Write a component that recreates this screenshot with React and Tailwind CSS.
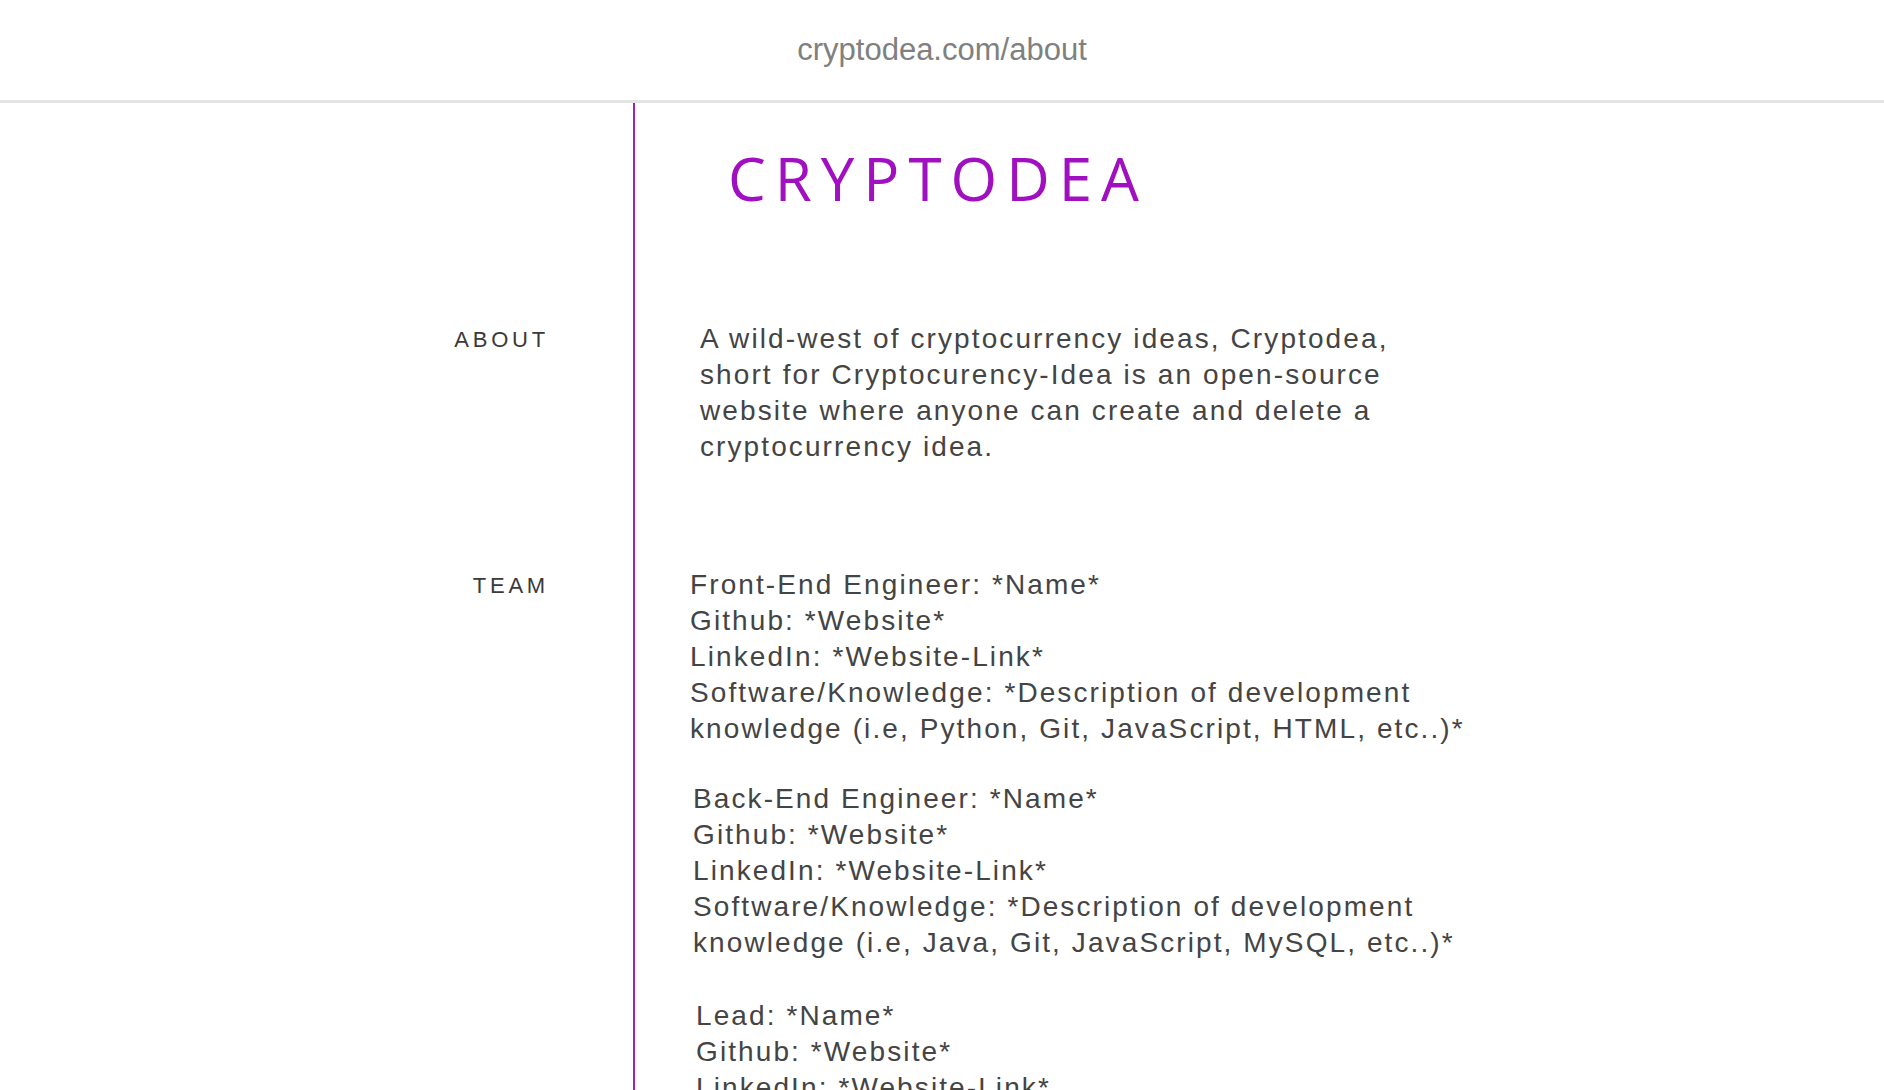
import React from "react";

const sans = "font-['Liberation_Sans',Arial,sans-serif]";

const team = [
  {
    pad: "pl-[55px]",
    gap: "",
    lines: [
      "Front-End Engineer: *Name*",
      "Github: *Website*",
      "LinkedIn: *Website-Link*",
      "Software/Knowledge: *Description of development",
      "knowledge (i.e, Python, Git, JavaScript, HTML, etc..)*",
    ],
  },
  {
    pad: "pl-[58px]",
    gap: "mt-[34px]",
    lines: [
      "Back-End Engineer: *Name*",
      "Github: *Website*",
      "LinkedIn: *Website-Link*",
      "Software/Knowledge: *Description of development",
      "knowledge (i.e, Java, Git, JavaScript, MySQL, etc..)*",
    ],
  },
  {
    pad: "pl-[61px]",
    gap: "mt-[37px]",
    lines: [
      "Lead: *Name*",
      "Github: *Website*",
      "LinkedIn: *Website-Link*",
      "Software/Knowledge: *Description of development",
      "knowledge (i.e, Leadership, Git, Design, etc..)*",
    ],
  },
];

function Row({ label, labelPad = "", children, className = "" }) {
  return (
    <div className="flex">
      <div
        className={`w-[633px] shrink-0 pr-[84px] text-right text-[22px] leading-[26px] tracking-[3.8px] text-[#3a3a3a] ${sans} ${labelPad}`}
      >
        {label}
      </div>
      <div className={`flex-1 border-l-2 border-[#a020c0] ${className}`}>{children}</div>
    </div>
  );
}

export default function App() {
  return (
    <div className="min-h-screen bg-white">
      {/* Address bar */}
      <header className="flex h-[103px] items-center justify-center border-b-[3px] border-[#e4e4e4]">
        <span className={`text-[31px] text-[#808080] ${sans}`}>cryptodea.com/about</span>
      </header>

      {/* Title */}
      <Row label="" className="pl-[93px] pt-[45px]">
        <h1 className="font-['Open_Sans',sans-serif] text-[60px] leading-none tracking-[9px] text-[#a010c0]">
          CRYPTODEA
        </h1>
      </Row>

      {/* About */}
      <Row label="ABOUT" labelPad="pt-[119px]" className="pl-[65px] pt-[113px]">
        <p
          className={`whitespace-nowrap text-[28px] leading-[36px] tracking-[2.1px] text-[#444] ${sans}`}
        >
          A wild-west of cryptocurrency ideas, Cryptodea,
          <br />
          short for Cryptocurency-Idea is an open-source
          <br />
          website where anyone can create and delete a
          <br />
          cryptocurrency idea.
        </p>
      </Row>

      {/* Team */}
      <Row label="TEAM" labelPad="pt-[108px]" className="pt-[102px] pb-16">
        {team.map((member, i) => (
          <div
            key={i}
            className={`${member.pad} ${member.gap} whitespace-nowrap text-[28px] leading-[36px] tracking-[2.1px] text-[#444] ${sans}`}
          >
            {member.lines.map((line) => (
              <div key={line}>{line}</div>
            ))}
          </div>
        ))}
      </Row>
    </div>
  );
}
